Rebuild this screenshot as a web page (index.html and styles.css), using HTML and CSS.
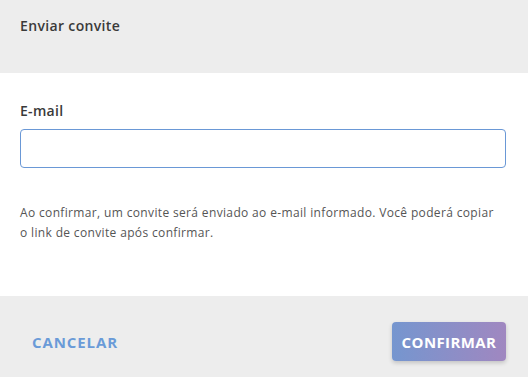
FILE: index.html
```html
<!DOCTYPE html>
<html lang="pt-BR">
<head>
<meta charset="utf-8">
<title>Enviar convite</title>
<link rel="stylesheet" href="styles.css">
</head>
<body>
<div class="dialog">
  <header class="dialog-header">
    <h1 class="dialog-title">Enviar convite</h1>
  </header>
  <main class="dialog-body">
    <label class="field-label" for="email">E-mail</label>
    <input class="field-input" id="email" type="email">
    <p class="hint">Ao confirmar, um convite será enviado ao e-mail informado. Você poderá copiar o link de convite após confirmar.</p>
  </main>
  <footer class="dialog-footer">
    <button class="btn btn-text" type="button">CANCELAR</button>
    <button class="btn btn-primary" type="button">CONFIRMAR</button>
  </footer>
</div>
</body>
</html>
```

FILE: styles.css
```css
* { box-sizing: border-box; }
html, body { margin: 0; padding: 0; }
body {
  font-family: "Open Sans", "Noto Sans", sans-serif;
  background: #ffffff;
  color: #3a3a3a;
  width: 528px;
  height: 377px;
}
.dialog {
  display: flex;
  flex-direction: column;
  height: 377px;
}
.dialog-header {
  background: #ededed;
  height: 73px;
  padding: 16px 20px 0;
}
.dialog-title {
  margin: 0;
  font-size: 14px;
  line-height: 20px;
  font-weight: 600;
  letter-spacing: 0.35px;
  color: #3a3a3a;
}
.dialog-body {
  flex: 1;
  padding: 28px 22px 0 20px;
  display: flex;
  flex-direction: column;
}
.field-label {
  font-size: 14px;
  line-height: 20px;
  font-weight: 600;
  letter-spacing: 0.3px;
  color: #3a3a3a;
  margin-bottom: 8px;
}
.field-input {
  width: 100%;
  height: 39px;
  border: 1px solid #6a98d6;
  border-radius: 4px;
  padding: 0 12px;
  font: inherit;
  outline: none;
}
.hint {
  margin: 35px 0 0;
  padding-right: 6px;
  font-size: 12px;
  line-height: 20px;
  letter-spacing: 0.35px;
  color: #555555;
}
.dialog-footer {
  background: #ededed;
  height: 81px;
  padding: 10px 22px 0 20px;
  display: flex;
  align-items: center;
  justify-content: space-between;
}
.btn {
  font-family: inherit;
  font-size: 15px;
  font-weight: 700;
  height: 39px;
  border: none;
  border-radius: 4px;
  padding: 0;
  cursor: pointer;
}
.btn-text {
  background: transparent;
  color: #6a9bd8;
  padding: 0 12px;
  letter-spacing: 0.9px;
}
.btn-primary {
  width: 114px;
  color: #ffffff;
  letter-spacing: 0.4px;
  background: linear-gradient(90deg, #7596cf, #a087c0);
  box-shadow: 0 2px 4px rgba(0, 0, 0, 0.18);
}
```
